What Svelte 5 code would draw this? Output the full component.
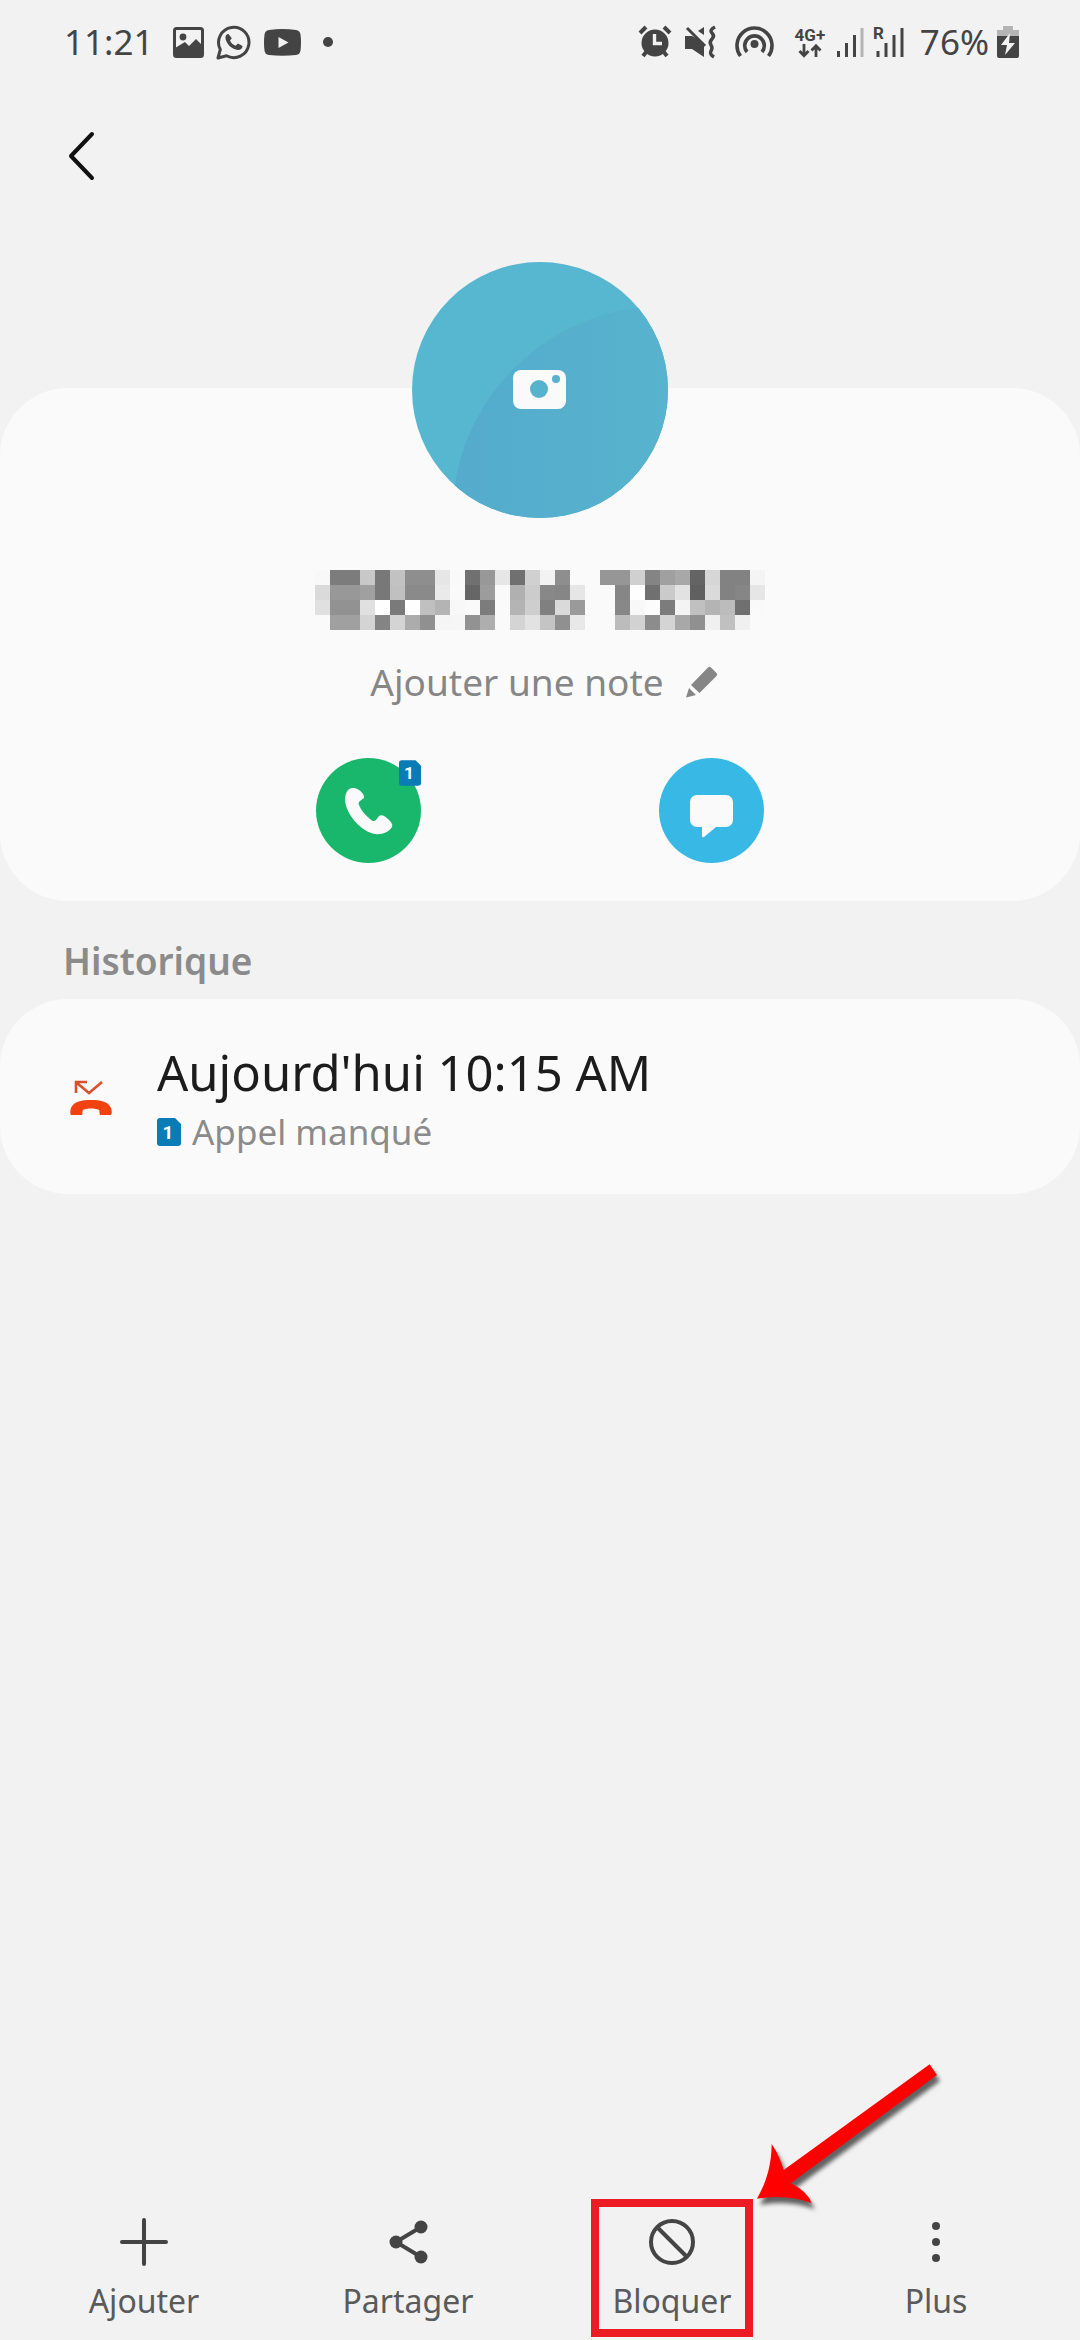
<script lang="ts">
	type ActionId = 'add' | 'share' | 'block' | 'more';

	const actions: { id: ActionId; label: string }[] = [
		{ id: 'add', label: 'Ajouter' },
		{ id: 'share', label: 'Partager' },
		{ id: 'block', label: 'Bloquer' },
		{ id: 'more', label: 'Plus' }
	];

	const history = [{ when: "Aujourd'hui 10:15 AM", kind: 'Appel manqué', sim: 1 }];

	// grey level of every tile in the censored phone number, one hex byte per tile
	const mosaic = [
		'f87c7cc878c28e8ee6f97098e670d0f28efafa9696d084a0a864d68282f4',
		'da9898a078c08a8aeafa669cfab0cc8886e6fafa86fe70cae260da8286e6',
		'e09292e0fe7afec0b4f8fa7cfab4ce80da9afafa88f8fc7cf4c0b4bc70f9',
		'faa0a0d484d4ac90f5f692aefad4e2c490e8fafabcd28cd4a890f0c0f0fa'
	].map((row) => row.match(/../g) ?? []);
</script>

{#snippet simBadge(n: number)}
	<svg class="sim" viewBox="0 0 24 28" aria-label="SIM {n}">
		<path d="M3 0h15l6 6v19a3 3 0 0 1-3 3H3a3 3 0 0 1-3-3V3a3 3 0 0 1 3-3z" fill="#0a7cb5" />
		<text x="11" y="21" text-anchor="middle">{n}</text>
	</svg>
{/snippet}

<div class="screen">
	<div class="status">
		<div class="status-side">
			<span class="clock">11:21</span>
			<svg class="gallery" viewBox="0 0 31 31" aria-hidden="true">
				<rect x="1.5" y="1.5" width="28" height="28" rx="2" fill="none" stroke="currentColor" stroke-width="3" />
				<circle cx="10" cy="10" r="3.4" fill="currentColor" />
				<path d="M2 21l10-6 4 4 7-7 6 6v11H2z" fill="currentColor" />
			</svg>
			<svg class="whatsapp" viewBox="0 0 36 36" aria-hidden="true">
				<path
					d="M2 34l2.3-8.5A15.2 15.2 0 1 1 10.5 31.8z"
					fill="none"
					stroke="currentColor"
					stroke-width="3"
					stroke-linejoin="round"
				/>
				<path
					d="M12.5 10c-2 0-3.5 2-3 4.5.9 5.5 6.5 11 12.5 11.5 2.5 0 4.5-1.5 4.5-4l-4.500-2.500-2.500 2.300c-2.500-1-4.500-3-5.500-5.300l1.800-2.200z"
					fill="currentColor"
				/>
			</svg>
			<svg class="youtube" viewBox="0 0 37 27" aria-hidden="true">
				<path
					d="M5 1Q18.5-.8 32 1q4 .5 4.5 4.5 1 8 0 16Q36 25.500 32 26q-13.500 1.600-27 0-4-.5-4.500-4.500-1-8 0-16Q1 1.500 5 1z"
					fill="currentColor"
				/>
				<path d="M14.500 8l10 5.500-10 5.500z" fill="#f2f2f2" />
			</svg>
			<span class="more-dot"></span>
		</div>

		<div class="status-side tight">
			<svg width="38" height="36" viewBox="0 0 38 36" aria-hidden="true">
				<g fill="none" stroke="currentColor" stroke-width="4">
					<path d="M4 9l6-6M28 3l6 6" />
					<path d="M11 27l-4 5M27 27l4 5" />
				</g>
				<circle cx="19" cy="19" r="13.500" fill="currentColor" />
				<path d="M18.500 10v9.500H26" fill="none" stroke="#f2f2f2" stroke-width="3.400" />
			</svg>
			<svg width="36" height="36" viewBox="0 0 36 36" aria-hidden="true">
				<path d="M3 12h7l12 7v14L10 25H3zM22 3v8l-6-4z" fill="currentColor" />
				<path d="M5 4l18 18" stroke="currentColor" stroke-width="3" />
				<path
					d="M33 3q-6 3-3 6t0 6-1 6 0 6 3 6"
					fill="none"
					stroke="currentColor"
					stroke-width="3.400"
				/>
			</svg>
			<svg width="58" height="36" viewBox="0 0 58 36" aria-hidden="true">
				<g fill="none" stroke="currentColor" stroke-width="3.600">
					<path d="M14.500 32a17.500 17.500 0 1 1 28 0" />
					<path d="M21 28a9.800 9.800 0 1 1 15 0" />
				</g>
				<circle cx="28.500" cy="20" r="4" fill="currentColor" />
			</svg>
			<div class="network">
				<span>4G+</span>
				<svg width="24" height="14" viewBox="0 0 24 14" aria-hidden="true">
					<path
						d="M6 0v11M1.500 7L6 11.800 10.500 7M18 13V2M13.500 6.500L18 1.800l4.500 4.700"
						fill="none"
						stroke="currentColor"
						stroke-width="2.800"
					/>
				</svg>
			</div>
			<svg width="28" height="36" viewBox="0 0 28 36" aria-hidden="true">
				<path d="M2.500 27v6M10.500 19v14M18.500 11v22" stroke="currentColor" stroke-width="3" />
				<path d="M26 4v29" stroke="#b4b4b4" stroke-width="3" />
			</svg>
			<svg class="signal" width="40" height="36" viewBox="0 0 40 36" aria-hidden="true">
				<text class="roaming" x="1" y="15">R</text>
				<path d="M6 27v6M14 19v14M22 11v22M30 4v29" stroke="currentColor" stroke-width="3" />
			</svg>
			<span class="clock">76%</span>
			<svg width="22" height="36" viewBox="0 0 22 36" aria-hidden="true">
				<path d="M6 2h10v4h6v8H0V6h6z" fill="#b4b4b4" />
				<path d="M0 12h22v20a2 2 0 0 1-2 2H2a2 2 0 0 1-2-2z" fill="currentColor" />
				<path d="M13 9L4 21h6L8 31l10-12h-6z" fill="#f2f2f2" />
			</svg>
		</div>
	</div>

	<header>
		<button class="back" aria-label="Retour">
			<svg width="28" height="52" viewBox="0 0 28 52" aria-hidden="true">
				<path
					d="M24 4L3 26l21 22"
					fill="none"
					stroke="currentColor"
					stroke-width="4"
					stroke-linecap="round"
					stroke-linejoin="round"
				/>
			</svg>
		</button>
	</header>

	<main>
		<section class="card profile">
			<button class="avatar" aria-label="Changer la photo">
				<svg viewBox="0 0 256 256" aria-hidden="true">
					<defs>
						<clipPath id="disc"><circle cx="128" cy="128" r="128" /></clipPath>
						<linearGradient id="shade" x1="0" y1="0" x2="1" y2="0">
							<stop offset="0" stop-color="#54abcc" />
							<stop offset=".5" stop-color="#57b3ce" />
							<stop offset="1" stop-color="#57b6cf" />
						</linearGradient>
					</defs>
					<g clip-path="url(#disc)">
						<rect width="256" height="256" fill="#57b7d0" />
						<circle cx="252" cy="256" r="212" fill="url(#shade)" />
					</g>
					<rect x="101" y="108" width="53" height="39" rx="8" fill="#fafafa" />
					<circle cx="127" cy="127" r="9" fill="#56b2cd" />
					<circle cx="144" cy="117" r="4" fill="#56b2cd" />
				</svg>
			</button>

			<svg class="number" viewBox="0 0 450 60" role="img" aria-label="Numéro masqué">
				{#each mosaic as row, y}
					{#each row as level, x}
						<rect x={x * 15} y={y * 15} width="15" height="15" fill="#{level}{level}{level}" />
					{/each}
				{/each}
			</svg>

			<button class="note">
				Ajouter une note
				<svg width="32" height="32" viewBox="0 0 32 32" aria-hidden="true">
					<path d="M5 19L22 1.500Q23.500 0 25 1.500l5.500 5.500q1.500 1.500 0 3L13.500 27zM3 22l7 7-10 2.500z" fill="currentColor" />
				</svg>
			</button>

			<div class="contact">
				<button class="round call" aria-label="Appeler">
					<svg viewBox="0 0 105 105" aria-hidden="true">
						<path
							d="M38 30c-6-1-9 5-9 12 1 15 17 32 30 34 7 1 14-2 17-7 1-3-1-5-3-7-4-4-7-6-10-4l-3 4c-2 2-4 1-6-1-5-4-9-9-11-14-1-2 0-3 1-4l4-3c1-3-4-9-10-10z"
							fill="#fafafa"
						/>
					</svg>
					<span class="corner">{@render simBadge(1)}</span>
				</button>
				<button class="round message" aria-label="Message">
					<svg viewBox="0 0 105 105" aria-hidden="true">
						<path
							d="M38 37h29a7 7 0 0 1 7 7v18a7 7 0 0 1-7 7H57L45 79q-2 1-2-1v-9h-5a7 7 0 0 1-7-7V44a7 7 0 0 1 7-7z"
							fill="#fafafa"
						/>
					</svg>
				</button>
			</div>
		</section>

		<h2>Historique</h2>

		<section class="card history">
			{#each history as entry}
				<div class="entry">
					<svg class="missed" viewBox="0 0 42 36" aria-hidden="true">
						<path d="M6 13V2h11M7 3l12 10L32 2" fill="none" stroke="#d9512c" stroke-width="2.600" />
						<path
							d="M1 35c-1-1-1-4 0-7 3-7 11-8 20-8s17 1 20 8c1 3 1 6 0 7H30c-1-2 0-4-1-5-3-2-13-2-16 0-1 1 0 3-1 5z"
							fill="#f1420f"
						/>
					</svg>
					<div>
						<p class="when">{entry.when}</p>
						<p class="kind">{@render simBadge(entry.sim)}{entry.kind}</p>
					</div>
				</div>
			{/each}
		</section>
	</main>

	<nav>
		{#each actions as action (action.id)}
			<button class="action">
				<svg width="48" height="48" viewBox="0 0 48 48" aria-hidden="true">
					{#if action.id === 'add'}
						<path d="M24 2v44M2 24h44" stroke="currentColor" stroke-width="4" stroke-linecap="round" />
					{:else if action.id === 'share'}
						<path d="M37 9L12 24l25 15" fill="none" stroke="currentColor" stroke-width="4" />
						<circle cx="37" cy="9" r="6.500" fill="currentColor" />
						<circle cx="12" cy="24" r="6.500" fill="currentColor" />
						<circle cx="37" cy="39" r="6.500" fill="currentColor" />
					{:else if action.id === 'block'}
						<circle cx="24" cy="24" r="21" fill="none" stroke="currentColor" stroke-width="4" />
						<path d="M9 9l30 30" stroke="currentColor" stroke-width="4" />
					{:else}
						<circle cx="24" cy="8" r="4" fill="currentColor" />
						<circle cx="24" cy="24" r="4" fill="currentColor" />
						<circle cx="24" cy="40" r="4" fill="currentColor" />
					{/if}
				</svg>
				<span class="label">{action.label}</span>
				{#if action.id === 'block'}
					<span class="highlight"></span>
					<svg class="arrow" viewBox="576 60 600 480" aria-hidden="true">
						<path
							d="M1106 73L1128 105L690 430Q740 455 752 490Q680 462 588 476Q632 400 632 312Q655 345 668 390Z"
							fill="#fe0000"
						/>
					</svg>
				{/if}
			</button>
		{/each}
	</nav>
</div>

<style>
	:global(body) {
		margin: 0;
		background: #f2f2f2;
	}

	.screen {
		display: flex;
		flex-direction: column;
		min-height: 100vh;
		overflow: hidden;
		background: #f2f2f2;
		color: #444;
		font-family: 'Noto Sans', sans-serif;
	}

	button {
		padding: 0;
		border: 0;
		background: none;
		color: inherit;
		font: inherit;
		cursor: pointer;
	}

	svg {
		display: block;
		flex-shrink: 0;
	}

	.status {
		display: flex;
		justify-content: space-between;
		align-items: center;
		height: 84px;
		padding: 0 61px 0 64px;
	}

	.status-side {
		display: flex;
		align-items: center;
		gap: 12px;
	}

	.status-side.tight {
		gap: 8px;
	}

	.clock {
		font-size: 35px;
		line-height: 50px;
	}

	.gallery {
		width: 31px;
		height: 31px;
		margin-left: 8px;
	}

	.whatsapp {
		width: 36px;
		height: 36px;
	}

	.youtube {
		width: 37px;
		height: 27px;
	}

	.more-dot {
		width: 10px;
		height: 10px;
		margin-left: 10px;
		border-radius: 50%;
		background: currentColor;
	}

	.network {
		display: flex;
		flex-direction: column;
		align-items: center;
		width: 36px;
		font: 700 17px/18px Roboto, sans-serif;
	}

	.signal {
		overflow: visible;
	}

	.roaming {
		font: 700 17px Roboto, sans-serif;
		fill: currentColor;
	}

	header {
		display: flex;
		align-items: center;
		height: 144px;
		padding: 0 56px;
	}

	.back {
		padding: 12px;
		color: #111;
	}

	main {
		flex: 1;
		padding-top: 160px;
	}

	.card {
		border-radius: 68px;
		background: #fafafa;
	}

	.profile {
		display: flex;
		flex-direction: column;
		align-items: center;
		padding-bottom: 38px;
	}

	.avatar {
		width: 256px;
		height: 256px;
		margin-top: -126px;
		border-radius: 50%;
	}

	.number {
		width: 450px;
		height: 60px;
		margin-top: 52px;
		shape-rendering: crispEdges;
	}

	.note {
		display: flex;
		align-items: center;
		gap: 22px;
		margin-top: 26px;
		padding-left: 8px;
		color: #868686;
		font-size: 37px;
		line-height: 52px;
	}

	.contact {
		display: flex;
		gap: 238px;
		margin-top: 50px;
	}

	.round {
		position: relative;
		width: 105px;
		height: 105px;
		border-radius: 50%;
	}

	.call {
		background: #19b76c;
	}

	.message {
		background: #38b8e4;
	}

	.corner {
		position: absolute;
		top: 2px;
		right: 0;
	}

	.sim {
		width: 24px;
		height: 28px;
	}

	.sim text {
		fill: #fff;
		font: 700 19px Roboto, sans-serif;
	}

	.corner .sim {
		width: 22px;
		height: 26px;
	}

	h2 {
		margin: 0;
		padding: 35px 63px 13px;
		color: #8b8b8b;
		font-size: 37px;
		font-weight: 600;
		line-height: 50px;
	}

	.history {
		padding: 39px 70px 36px;
	}

	.entry {
		display: flex;
		align-items: center;
		gap: 45px;
	}

	.missed {
		width: 42px;
		height: 36px;
	}

	p {
		margin: 0;
	}

	.when {
		color: #1c1c1c;
		font-size: 49px;
		line-height: 68px;
	}

	.kind {
		display: flex;
		align-items: center;
		gap: 11px;
		color: #8b8b8b;
		font-size: 35px;
		line-height: 52px;
	}

	nav {
		display: flex;
		padding: 0 12px 16px;
	}

	.action {
		position: relative;
		display: flex;
		flex: 1;
		flex-direction: column;
		align-items: center;
		gap: 12px;
		font-size: 32px;
		line-height: 46px;
	}

	.label {
		color: #5a5a5a;
	}

	.highlight {
		position: absolute;
		top: -19px;
		bottom: -13px;
		left: calc(50% - 81px);
		width: 146px;
		border: 8px solid #ed1c24;
	}

	.arrow {
		position: absolute;
		bottom: 104px;
		left: calc(50% + 81px);
		width: 200px;
		height: 160px;
		filter: drop-shadow(3px 6px 2px rgba(0, 0, 0, 0.6));
	}
</style>
